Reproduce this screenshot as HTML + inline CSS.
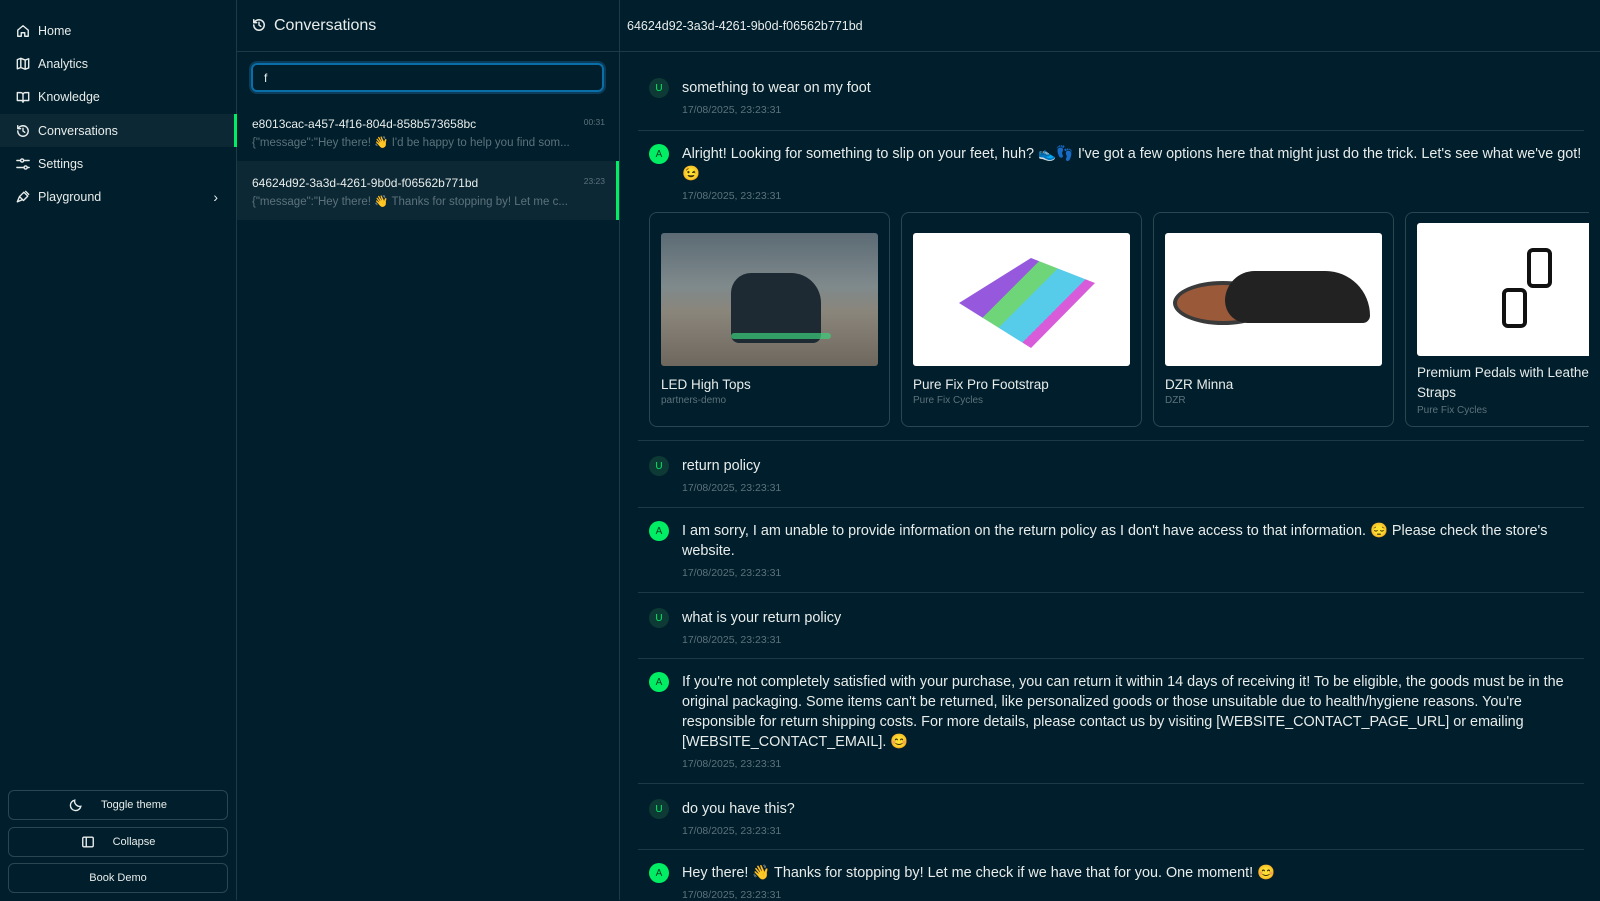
<!DOCTYPE html>
<html><head><meta charset="utf-8"><style>
*{box-sizing:border-box;margin:0;padding:0}
body{width:1600px;height:900px;overflow:hidden;background:#001e2b;font-family:"Liberation Sans","Noto Sans CJK JP",sans-serif;color:#e8edeb;position:relative}
.abs{position:absolute}
.side{left:0;top:0;width:237px;height:900px;border-right:1px solid #1c3a47}
.nav{position:absolute;left:0;width:236px;height:33px;display:flex;align-items:center;padding-left:16px;font-size:12.5px;color:#e8edeb}
.nav svg{width:14px;height:14px;margin-right:8px;fill:none;stroke:#e8edeb;stroke-width:1.6;stroke-linecap:round;stroke-linejoin:round}
.nav.act{background:#0c2834}
.btn{position:absolute;left:8px;width:220px;height:30px;border:1px solid #2a4653;border-radius:6px;display:flex;align-items:center;justify-content:center;font-size:11px;color:#e8edeb}
.btn svg{width:14px;height:14px;margin-right:18px;fill:none;stroke:#e8edeb;stroke-width:1.6}
.list{left:237px;top:0;width:383px;height:900px;border-right:1px solid #1c3a47}
.hdr{position:absolute;left:0;top:0;right:0;height:52px;border-bottom:1px solid #1c3a47}
.item{position:absolute;left:0;width:382px;padding:0 14px 0 15px}
.item .t{display:flex;justify-content:space-between;font-size:12px;color:#e8edeb}
.item .t span{font-size:8.5px;color:#5d727c}
.item .p{font-size:11.5px;color:#5d727c;margin-top:4px;white-space:nowrap;overflow:hidden}
.chat{left:620px;top:0;width:980px;height:900px}
.msg{position:absolute;left:29px;width:940px}
.av{position:absolute;left:0;width:20px;height:20px;border-radius:50%;font-size:10px;display:flex;align-items:center;justify-content:center}
.av.u{background:#0d3a35;color:#00ed64}
.av.a{background:#00ed64;color:#003c20}
.tx{margin-left:33px;font-size:14.4px;line-height:20px;color:#e8edeb}
.ts{margin-left:33px;font-size:10.5px;color:#5d727c;margin-top:6px}
.sep{position:absolute;left:18px;width:946px;height:1px;background:#1c3a47}
.card{position:absolute;top:212px;width:241px;height:215px;border:1px solid #2a4653;border-radius:8px;overflow:hidden}
.card .img{position:absolute;left:11px;top:20px;width:217px;height:133px;border-radius:3px;background:#fff;overflow:hidden}
.card .n{position:absolute;left:11px;top:162px;font-size:13.5px;color:#e8edeb;line-height:20px}
.card .b{position:absolute;left:11px;top:182px;font-size:10px;color:#5d727c}
</style></head><body>
<div class="abs side">
 <div class="nav" style="top:14px"><svg viewBox="0 0 16 16"><path d="M2 7l6-5 6 5v7H10v-4H6v4H2z"/></svg>Home</div>
 <div class="nav" style="top:47px"><svg viewBox="0 0 16 16"><path d="M1.5 3l4-1.5 5 2 4-1.5v10.5l-4 1.5-5-2-4 1.5zM5.5 1.5v10.5M10.5 3.5V14"/></svg>Analytics</div>
 <div class="nav" style="top:80px"><svg viewBox="0 0 16 16"><path d="M1.5 3h4a2.5 2.5 0 012.5 2.5V14a2 2 0 00-2-2H1.5zM14.5 3h-4A2.5 2.5 0 008 5.5V14a2 2 0 012-2h4.5z"/></svg>Knowledge</div>
 <div class="nav act" style="top:114px"><svg viewBox="0 0 16 16"><path d="M2 8a6 6 0 106-6 6.5 6.5 0 00-4.5 1.8L2 5.3M2 2v3.3h3.3M8 5v3l2 1.5"/></svg>Conversations</div>
 <div class="abs" style="left:234px;top:114px;width:3px;height:33px;background:#00ed64"></div>
 <div class="nav" style="top:147px"><svg viewBox="0 0 16 16"><path d="M9 4h6M1 4h4M13 12h2M1 12h8"/><circle cx="7" cy="4" r="1.8"/><circle cx="11" cy="12" r="1.8"/></svg>Settings</div>
 <div class="nav" style="top:180px"><svg viewBox="0 0 16 16"><path d="M9 2.5l4.5 4.5-5 5L4 7.5zM4 7.5l-2.5 6 6-2.5M11 1.5l3.5 3.5"/></svg>Playground<span style="position:absolute;right:18px;font-size:14px">›</span></div>
 <div class="btn" style="top:790px"><svg viewBox="0 0 16 16"><path d="M13.5 9.5A6 6 0 016.5 2.5a6 6 0 107 7z"/></svg>Toggle theme</div>
 <div class="btn" style="top:827px"><svg viewBox="0 0 16 16"><rect x="2" y="2.5" width="12" height="11" rx="1.5"/><path d="M6 2.5v11"/></svg>Collapse</div>
 <div class="btn" style="top:863px">Book Demo</div>
</div>
<div class="abs list">
 <div class="hdr"><svg class="abs" style="left:15px;top:18px" width="14" height="14" viewBox="0 0 16 16" fill="none" stroke="#e8edeb" stroke-width="1.7" stroke-linecap="round"><path d="M2 8a6 6 0 106-6 6.5 6.5 0 00-4.5 1.8L2 5.3M2 2v3.3h3.3M8 5v3l2 1.5"/></svg><div class="abs" style="left:37px;top:17px;font-size:16px">Conversations</div></div>
 <div class="abs" style="left:14px;top:63px;width:353px;height:29px;border:2px solid #0a6ea8;border-radius:6px;box-shadow:0 0 0 2px #0b3c5a;font-size:12px;padding:6px 11px;color:#e8edeb">f</div>
 <div class="item" style="top:117px;height:42px"><div class="t">e8013cac-a457-4f16-804d-858b573658bc<span>00:31</span></div><div class="p">{"message":"Hey there! 👋 I'd be happy to help you find som...</div></div>
 <div class="item" style="top:161px;height:59px;background:#0c2834;padding-top:15px"><div class="t">64624d92-3a3d-4261-9b0d-f06562b771bd<span>23:23</span></div><div class="p">{"message":"Hey there! 👋 Thanks for stopping by! Let me c...</div></div>
 <div class="abs" style="left:379px;top:161px;width:3px;height:59px;background:#00ed64"></div>
</div>
<div class="abs chat">
 <div class="hdr"><div class="abs" style="left:7px;top:19px;font-size:12.5px">64624d92-3a3d-4261-9b0d-f06562b771bd</div></div>
 <div class="msg" style="top:78px"><div class="av u" style="top:0">U</div><div class="tx">something to wear on my foot</div><div class="ts">17/08/2025, 23:23:31</div></div>
 <div class="sep" style="top:130px"></div>
 <div class="msg" style="top:144px"><div class="av a" style="top:0">A</div><div class="tx">Alright! Looking for something to slip on your feet, huh? 👟👣 I've got a few options here that might just do the trick. Let's see what we've got! 😉</div><div class="ts">17/08/2025, 23:23:31</div></div>
 <div class="card" style="left:29px"><div class="img" style="background:linear-gradient(180deg,#5b6a74 0%,#7f8a8c 40%,#8a857a 60%,#6e675e 100%)"><div class="abs" style="left:70px;top:40px;width:90px;height:70px;background:#1d2a33;border-radius:20px 30px 8px 8px"></div><div class="abs" style="left:70px;top:100px;width:100px;height:6px;background:#3ccf7a;opacity:.7;border-radius:3px"></div></div><div class="n">LED High Tops</div><div class="b">partners-demo</div></div>
 <div class="card" style="left:281px"><div class="img"><div class="abs" style="left:30px;top:20px;width:160px;height:100px;background:linear-gradient(135deg,#e9e96a 0 20%,#8a46d8 20% 40%,#5fd06a 40% 50%,#43c5e8 50% 65%,#d44ad6 65% 75%,#e23040 75% 88%,#f09030 88%);clip-path:polygon(10% 50%,55% 5%,95% 30%,55% 95%);opacity:.9"></div></div><div class="n">Pure Fix Pro Footstrap</div><div class="b">Pure Fix Cycles</div></div>
 <div class="card" style="left:533px"><div class="img"><div class="abs" style="left:8px;top:48px;width:100px;height:44px;border-radius:50%;background:#9a5a3a;border:4px solid #3a3a3a"></div><div class="abs" style="left:60px;top:38px;width:145px;height:52px;background:#222;border-radius:40px 60px 10px 30px"></div></div><div class="n">DZR Minna</div><div class="b">DZR</div></div>
 <div class="card" style="left:785px;width:184px;border-right:none;border-radius:8px 0 0 8px"><div class="img" style="top:10px;width:200px"><div class="abs" style="left:110px;top:25px;width:25px;height:40px;border:4px solid #111;border-radius:6px"></div><div class="abs" style="left:85px;top:65px;width:25px;height:40px;border:4px solid #111;border-radius:6px"></div></div><div class="n" style="top:150px;white-space:nowrap">Premium Pedals with Leather<br>Straps</div><div class="b" style="top:192px">Pure Fix Cycles</div></div>
 <div class="sep" style="top:440px"></div>
 <div class="msg" style="top:456px"><div class="av u" style="top:0">U</div><div class="tx">return policy</div><div class="ts">17/08/2025, 23:23:31</div></div>
 <div class="sep" style="top:507px"></div>
 <div class="msg" style="top:521px"><div class="av a" style="top:0">A</div><div class="tx">I am sorry, I am unable to provide information on the return policy as I don't have access to that information. 😔 Please check the store's website.</div><div class="ts">17/08/2025, 23:23:31</div></div>
 <div class="sep" style="top:592px"></div>
 <div class="msg" style="top:608px"><div class="av u" style="top:0">U</div><div class="tx">what is your return policy</div><div class="ts">17/08/2025, 23:23:31</div></div>
 <div class="sep" style="top:658px"></div>
 <div class="msg" style="top:672px"><div class="av a" style="top:0">A</div><div class="tx">If you're not completely satisfied with your purchase, you can return it within 14 days of receiving it! To be eligible, the goods must be in the original packaging. Some items can't be returned, like personalized goods or those unsuitable due to health/hygiene reasons. You're responsible for return shipping costs. For more details, please contact us by visiting [WEBSITE_CONTACT_PAGE_URL] or emailing [WEBSITE_CONTACT_EMAIL]. 😊</div><div class="ts">17/08/2025, 23:23:31</div></div>
 <div class="sep" style="top:783px"></div>
 <div class="msg" style="top:799px"><div class="av u" style="top:0">U</div><div class="tx">do you have this?</div><div class="ts">17/08/2025, 23:23:31</div></div>
 <div class="sep" style="top:849px"></div>
 <div class="msg" style="top:863px"><div class="av a" style="top:0">A</div><div class="tx">Hey there! 👋 Thanks for stopping by! Let me check if we have that for you. One moment! 😊</div><div class="ts">17/08/2025, 23:23:31</div></div>
</div>
</body></html>
